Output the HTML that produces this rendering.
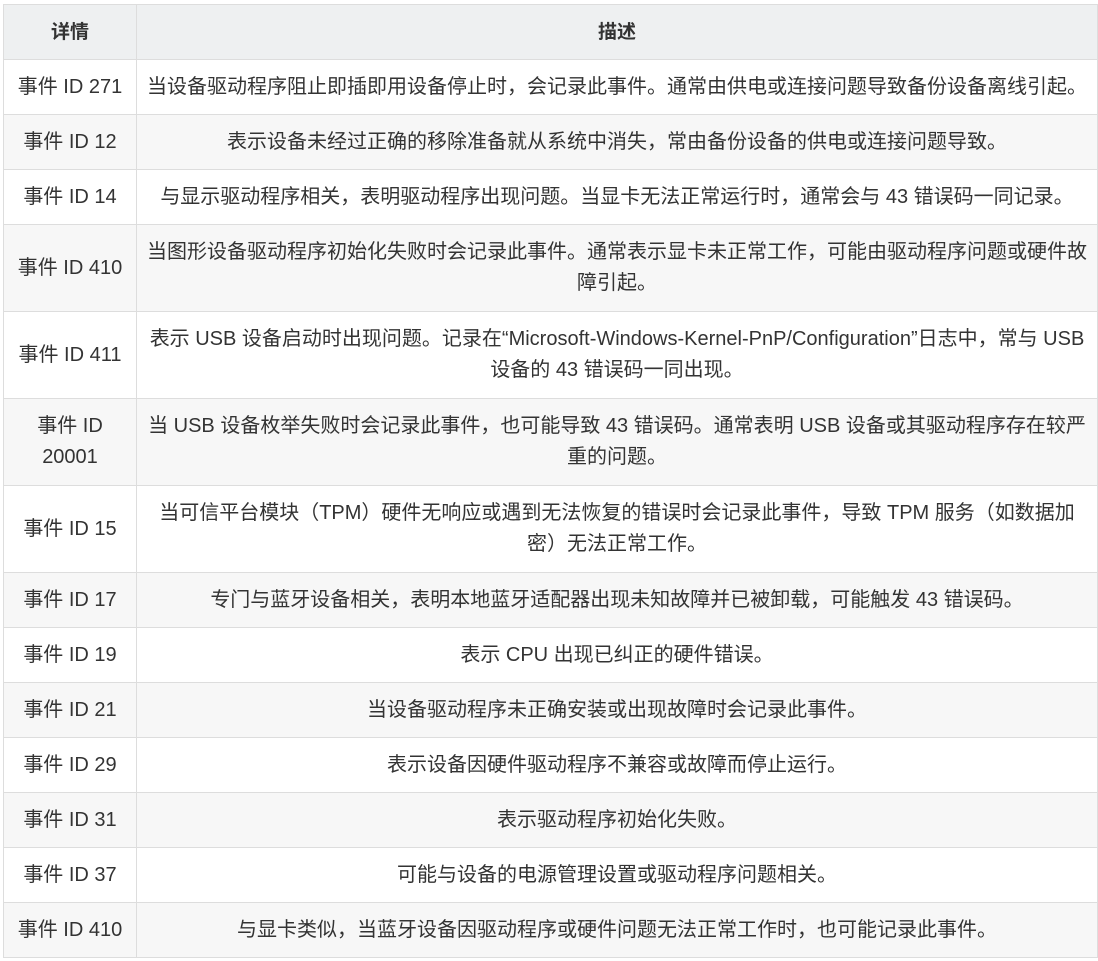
<!DOCTYPE html>
<html><head><meta charset="utf-8"><style>
html,body{margin:0;padding:0;background:#fff;}
table{position:absolute;left:3px;top:4px;width:1095px;border-collapse:collapse;table-layout:fixed;font-family:"Liberation Sans","Noto Sans CJK SC",sans-serif;font-size:20px;color:#333;}
td,th{border:1px solid #ddd;text-align:center;vertical-align:middle;padding:0 4px;line-height:31px;white-space:nowrap;overflow:hidden;}
th{background:#eef0f1;font-weight:bold;height:54px;font-size:19px;}
tr:nth-child(even) td{background:#f7f7f7;}
tr:nth-child(odd) td{background:#fff;}
tr.s td{height:54px;}
tr.d td{height:86px;}
col.a{width:133px;}
</style></head><body>
<table>
<colgroup><col class="a"><col></colgroup>
<thead><tr><th>详情</th><th>描述</th></tr></thead>
<tbody>
<tr class="s"><td>事件 ID 271</td><td>当设备驱动程序阻止即插即用设备停止时，会记录此事件。通常由供电或连接问题导致备份设备离线引起。</td></tr>
<tr class="s"><td>事件 ID 12</td><td>表示设备未经过正确的移除准备就从系统中消失，常由备份设备的供电或连接问题导致。</td></tr>
<tr class="s"><td>事件 ID 14</td><td>与显示驱动程序相关，表明驱动程序出现问题。当显卡无法正常运行时，通常会与 43 错误码一同记录。</td></tr>
<tr class="d"><td>事件 ID 410</td><td>当图形设备驱动程序初始化失败时会记录此事件。通常表示显卡未正常工作，可能由驱动程序问题或硬件故<br>障引起。</td></tr>
<tr class="d"><td>事件 ID 411</td><td>表示 USB 设备启动时出现问题。记录在“Microsoft-Windows-Kernel-PnP/Configuration”日志中，常与 USB<br>设备的 43 错误码一同出现。</td></tr>
<tr class="d"><td>事件 ID<br>20001</td><td>当 USB 设备枚举失败时会记录此事件，也可能导致 43 错误码。通常表明 USB 设备或其驱动程序存在较严<br>重的问题。</td></tr>
<tr class="d"><td>事件 ID 15</td><td>当可信平台模块（TPM）硬件无响应或遇到无法恢复的错误时会记录此事件，导致 TPM 服务（如数据加<br>密）无法正常工作。</td></tr>
<tr class="s"><td>事件 ID 17</td><td>专门与蓝牙设备相关，表明本地蓝牙适配器出现未知故障并已被卸载，可能触发 43 错误码。</td></tr>
<tr class="s"><td>事件 ID 19</td><td>表示 CPU 出现已纠正的硬件错误。</td></tr>
<tr class="s"><td>事件 ID 21</td><td>当设备驱动程序未正确安装或出现故障时会记录此事件。</td></tr>
<tr class="s"><td>事件 ID 29</td><td>表示设备因硬件驱动程序不兼容或故障而停止运行。</td></tr>
<tr class="s"><td>事件 ID 31</td><td>表示驱动程序初始化失败。</td></tr>
<tr class="s"><td>事件 ID 37</td><td>可能与设备的电源管理设置或驱动程序问题相关。</td></tr>
<tr class="s"><td>事件 ID 410</td><td>与显卡类似，当蓝牙设备因驱动程序或硬件问题无法正常工作时，也可能记录此事件。</td></tr>
</tbody></table>
</body></html>
